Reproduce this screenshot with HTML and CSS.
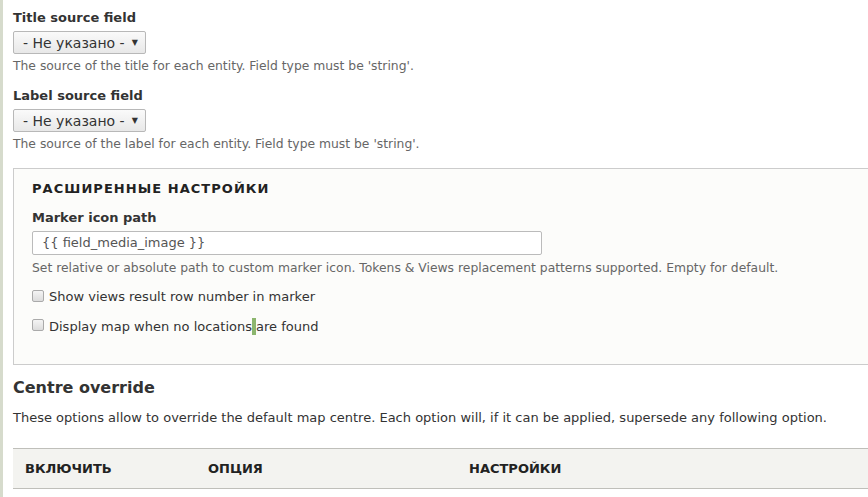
FILE: index.html
```html
<!DOCTYPE html>
<html lang="ru">
<head>
<meta charset="utf-8">
<link rel="stylesheet" href="styles.css">
</head>
<body>
<div class="page">
  <div class="form-item">
    <label class="label">Title source field</label>
    <div class="select"><span>- Не указано -</span><span class="arrow">▼</span></div>
    <div class="desc">The source of the title for each entity. Field type must be 'string'.</div>
  </div>
  <div class="form-item">
    <label class="label">Label source field</label>
    <div class="select"><span>- Не указано -</span><span class="arrow">▼</span></div>
    <div class="desc">The source of the label for each entity. Field type must be 'string'.</div>
  </div>

  <div class="fieldset">
    <div class="legend">Расширенные настройки</div>
    <div class="form-item inner">
      <label class="label">Marker icon path</label>
      <div class="input">{{ field_media_image }}</div>
      <div class="desc">Set relative or absolute path to custom marker icon. Tokens &amp; Views replacement patterns supported. Empty for default.</div>
    </div>
    <div class="check"><span class="box"></span><span>Show views result row number in marker</span></div>
    <div class="check"><span class="box"></span><span>Display map when no locations<span class="caret"></span>are found</span></div>
  </div>

  <h3 class="heading">Centre override</h3>
  <p class="intro">These options allow to override the default map centre. Each option will, if it can be applied, supersede any following option.</p>
  <div class="thead">
    <div class="th c1">Включить</div>
    <div class="th c2">Опция</div>
    <div class="th c3">Настройки</div>
  </div>
</div>
</body>
</html>
```
FILE: styles.css
```css
html, body { margin: 0; padding: 0; background: #fff; }
body {
  font-family: "DejaVu Sans", "Noto Sans", sans-serif;
  color: #222330;
}
.page {
  border-left: 3px solid #d6dbcc;
  padding: 10px 0 20px 10px;
  min-height: 480px;
}
.form-item { margin-bottom: 14px; }
.label {
  display: block;
  font-weight: bold;
  font-size: 13px;
  line-height: 16px;
  color: #333;
  margin-bottom: 5px;
}
.select {
  display: inline-flex;
  align-items: center;
  justify-content: space-between;
  box-sizing: border-box;
  width: 133px;
  height: 23px;
  padding: 0 7px 0 9px;
  border: 1px solid #b8b8b8;
  border-radius: 2px;
  background: linear-gradient(#fafafa, #e8e8e8);
  font-size: 14px;
  color: #333;
}
.arrow { font-size: 8px; color: #333; }
.desc {
  font-size: 12.35px;
  line-height: 16px;
  color: #666;
  margin-top: 4px;
}
.fieldset {
  border: 1px solid #ccc;
  border-right: none;
  background: #fcfcfa;
  margin-top: 16px;
  padding: 12px 0 16px 18px;
}
.legend {
  text-transform: uppercase;
  font-weight: bold;
  font-size: 13px;
  letter-spacing: 1.05px;
  color: #222;
  line-height: 16px;
  margin-bottom: 13px;
}
.inner { margin-bottom: 13px; }
.inner .desc { margin-top: 5px; }
.input {
  box-sizing: border-box;
  width: 510px;
  height: 24px;
  border: 1px solid #bbb;
  border-radius: 2px;
  background: #fff;
  padding: 2px 9px;
  font-size: 13px;
  line-height: 18px;
  color: #555;
}
.check {
  display: flex;
  align-items: center;
  font-size: 13px;
  color: #333;
  line-height: 16px;
  margin-bottom: 13px;
}
.box {
  box-sizing: border-box;
  width: 12px; height: 12px;
  border: 1px solid #aaa;
  border-radius: 2px;
  background: linear-gradient(#f4f4f4, #dcdcdc);
  margin-right: 5px;
  margin-top: -3px;
}
.caret {
  display: inline-block;
  width: 4px;
  height: 17px;
  background: #8cb66e;
  vertical-align: -4px;
}
.heading {
  font-size: 16px;
  font-weight: bold;
  color: #333;
  margin: 13px 0 0;
  line-height: 20px;
}
.intro {
  font-size: 13px;
  color: #333;
  margin: 12px 0 0;
  line-height: 16px;
}
.thead {
  display: flex;
  align-items: center;
  margin-top: 22px;
  height: 39px;
  border-top: 1px solid #bfbfba;
  border-bottom: 1px solid #bfbfba;
  background: #f3f3f0;
}
.th {
  text-transform: uppercase;
  font-weight: bold;
  font-size: 13px;
  color: #222;
}
.c1 { width: 195px; padding-left: 12px; box-sizing: border-box; }
.c2 { width: 261px; }
```
